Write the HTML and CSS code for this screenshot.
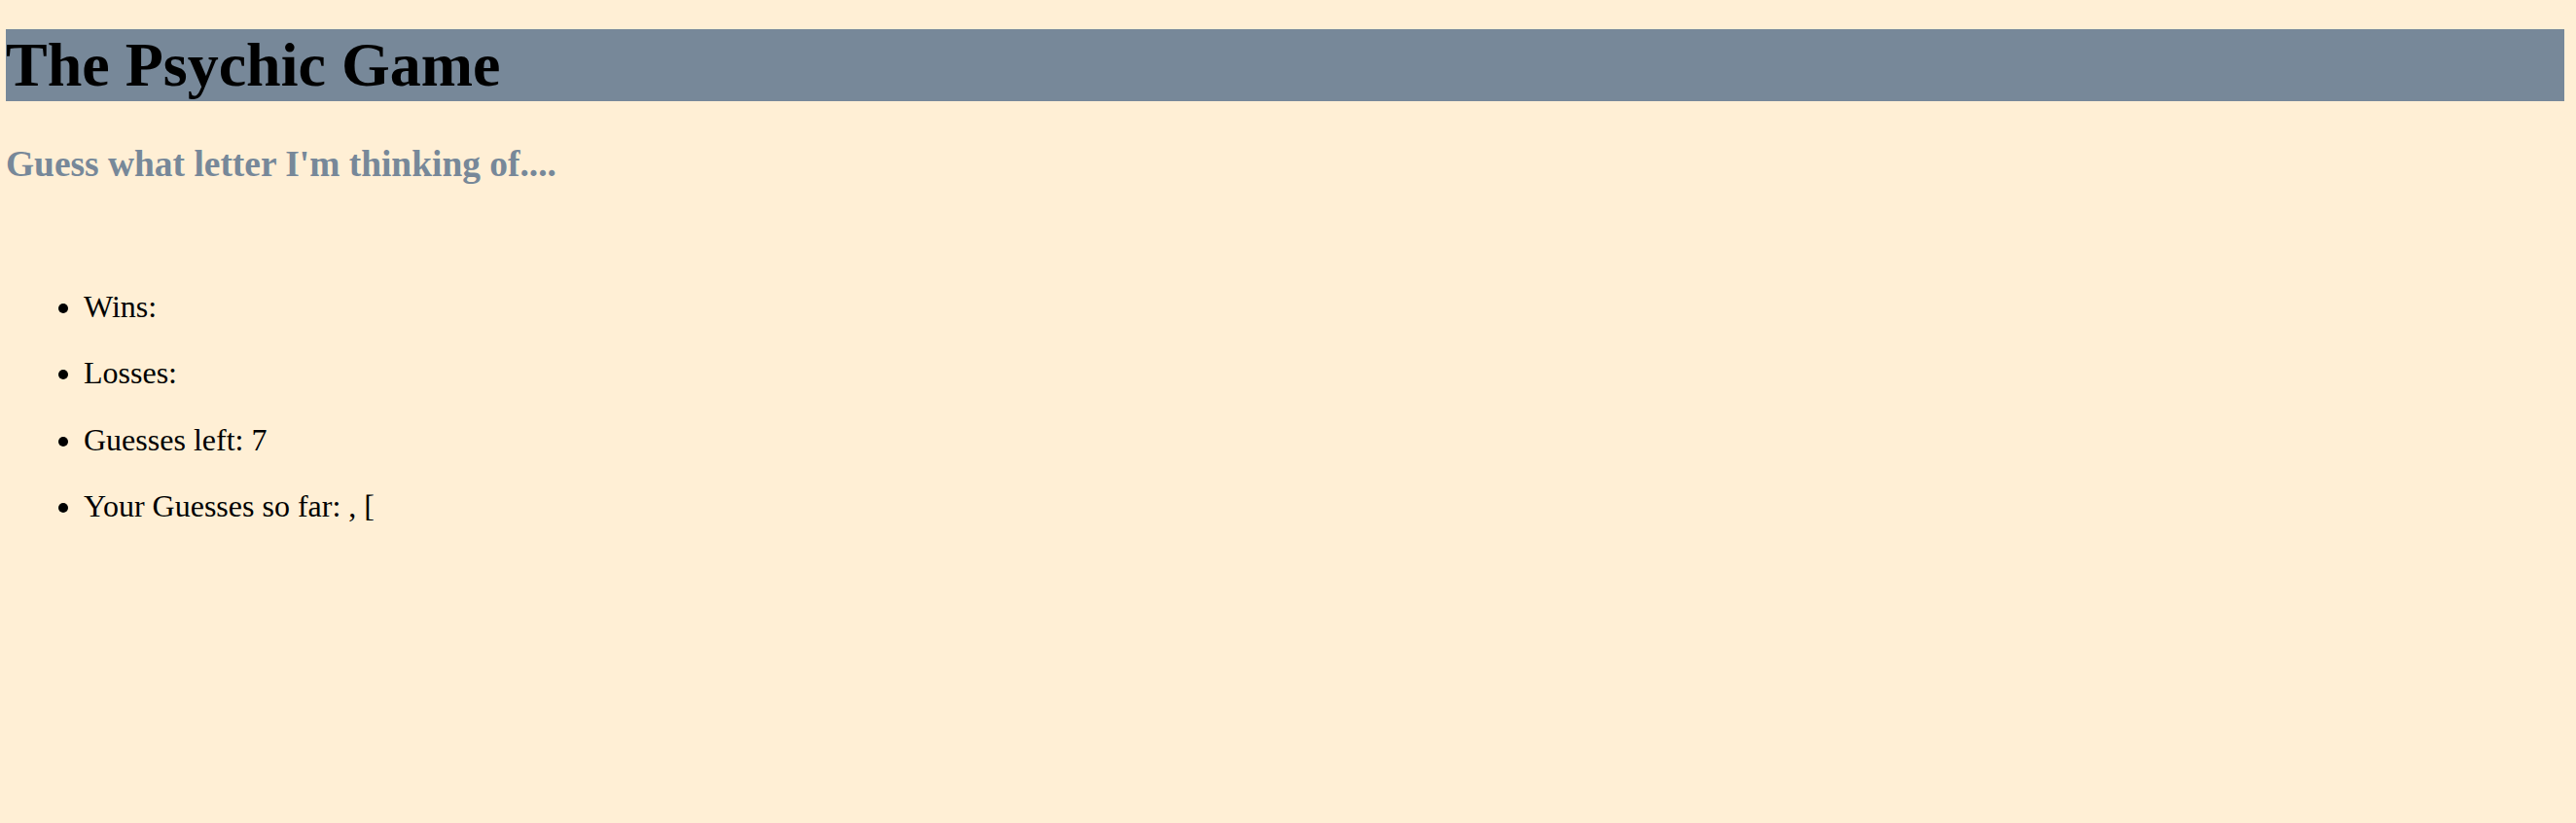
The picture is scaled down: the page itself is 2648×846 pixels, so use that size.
FILE: index.html
```html
<!DOCTYPE html>
<html lang="en">
<head>
<meta charset="utf-8">
<title>The Psychic Game</title>
<link rel="stylesheet" href="styles.css">
</head>
<body>
  <h1 class="title">The Psychic Game</h1>
  <h3 class="subtitle">Guess what letter I'm thinking of....</h3>
  <ul class="stats">
    <li class="stat">Wins: </li>
    <li class="stat">Losses: </li>
    <li class="stat">Guesses left: 7</li>
    <li class="stat">Your Guesses so far: , [</li>
  </ul>
</body>
</html>
```

FILE: styles.css
```css
html {
  background: #FFEFD5;
}

body {
  margin: 0 12px 0 6px;
  background: #FFEFD5;
  font-family: "Liberation Serif", "Times New Roman", serif;
  color: #000;
}

.title {
  margin: 30px 0 43px;
  background: #778899;
  font-size: 64px;
  font-weight: bold;
  line-height: 73.6px;
}

.subtitle {
  margin: 0;
  color: #778899;
  font-size: 37.44px;
  font-weight: bold;
  line-height: 43px;
}

.stats {
  margin: 107.5px 0 0;
  padding-left: 80px;
  list-style: disc;
}

.stat {
  margin: 32px 0;
  font-size: 32px;
  line-height: 36.3px;
}
```
